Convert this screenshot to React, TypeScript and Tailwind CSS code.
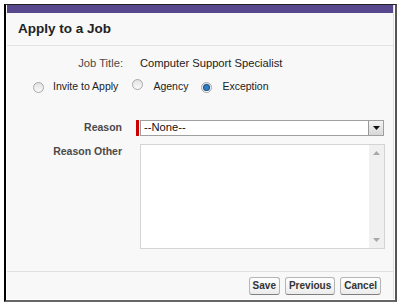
import React from "react";

function Radio({ checked }: { checked?: boolean }) {
  return (
    <span className="inline-flex items-center justify-center w-[11px] h-[11px] rounded-full border border-[#a8a8a8] bg-gradient-to-b from-[#e2e2e2] to-[#fafafa]">
      {checked && (
        <span className="w-[5px] h-[5px] rounded-full bg-[#2c7fc4] ring-1 ring-[#1d4f80]" />
      )}
    </span>
  );
}

function Btn({ children }: { children: React.ReactNode }) {
  return (
    <button className="h-[18px] px-[3px] border border-[#b5b5b5] border-b-[#7f7f7f] rounded-[3px] bg-gradient-to-b from-white to-[#ececec] text-[10px] font-bold text-[#333] leading-none">
      {children}
    </button>
  );
}

export default function App() {
  return (
    <div className="w-[398px] h-[305px] bg-white pl-[4px] pt-[4px]" style={{ fontFamily: '"Liberation Sans", Arial, sans-serif' }}>
      <div className="w-[393px] h-[298px] border-l-2 border-t border-l-black border-t-[#222] border-r-2 border-b-2 border-r-[#555] border-b-[#666] bg-white p-[1px] pt-0">
        <div className="h-full bg-[#f8f8f8] flex flex-col border-r border-[#e0e0e0]">
          <div className="h-[8px] bg-[#57488e]" />
          <div className="h-[33px] flex items-center pl-[11px] border-b border-[#e2e2e2] text-[13.5px] font-bold text-[#222]">
            Apply to a Job
          </div>
          <div className="flex items-center mt-[9px] h-[16px] text-[11.2px] text-[#222]">
            <div className="w-[116px] text-right text-[#4a4a4a]">Job Title:</div>
            <div className="ml-[17px]">Computer Support Specialist</div>
          </div>
          <div className="flex items-center mt-[8px] h-[16px] text-[10.5px] text-[#222] pl-[26px]">
            <Radio />
            <span className="ml-[9px]">Invite to Apply</span>
            <span className="ml-[14px]"><Radio /></span>
            <span className="ml-[10px]">Agency</span>
            <span className="ml-[13px]"><Radio checked /></span>
            <span className="ml-[10px]">Exception</span>
          </div>
          <div className="flex items-center mt-[25px] h-[16px]">
            <div className="w-[115px] text-right text-[10.5px] font-bold text-[#4a4a4a]">Reason</div>
            <div className="ml-[14px] w-[3px] h-[16px] bg-[#c00]" />
            <div className="ml-[1px] w-[244px] h-[16px] border border-[#a0a0a0] bg-white flex items-center">
              <span className="flex-1 text-[11.2px] text-[#111] pl-[3px] leading-none">--None--</span>
              <span className="w-[15px] h-[14px] border-l border-[#999] bg-gradient-to-b from-[#f4f4f4] to-[#d8d8d8] flex items-center justify-center">
                <svg width="7" height="4" viewBox="0 0 7 4"><path d="M0 0h7L3.5 4z" fill="#111" /></svg>
              </span>
            </div>
          </div>
          <div className="flex mt-[8px]">
            <div className="w-[115px] text-right text-[10.5px] font-bold text-[#4a4a4a] leading-[14px]">Reason Other</div>
            <div className="ml-[18px] w-[245px] h-[105px] border border-[#d4d4d4] bg-white flex justify-end">
              <div className="w-[15px] h-full bg-[#f0f0f0] flex flex-col items-center justify-between py-[6px]">
                <svg width="7" height="4" viewBox="0 0 7 4"><path d="M0 4h7L3.5 0z" fill="#a8a8a8" /></svg>
                <svg width="7" height="4" viewBox="0 0 7 4"><path d="M0 0h7L3.5 4z" fill="#a8a8a8" /></svg>
              </div>
            </div>
          </div>
          <div className="mt-auto h-[28px] border-t border-[#e0e0e0] flex items-center justify-end gap-[5px] pr-[12px]">
            <Btn>Save</Btn>
            <Btn>Previous</Btn>
            <Btn>Cancel</Btn>
          </div>
        </div>
      </div>
    </div>
  );
}
